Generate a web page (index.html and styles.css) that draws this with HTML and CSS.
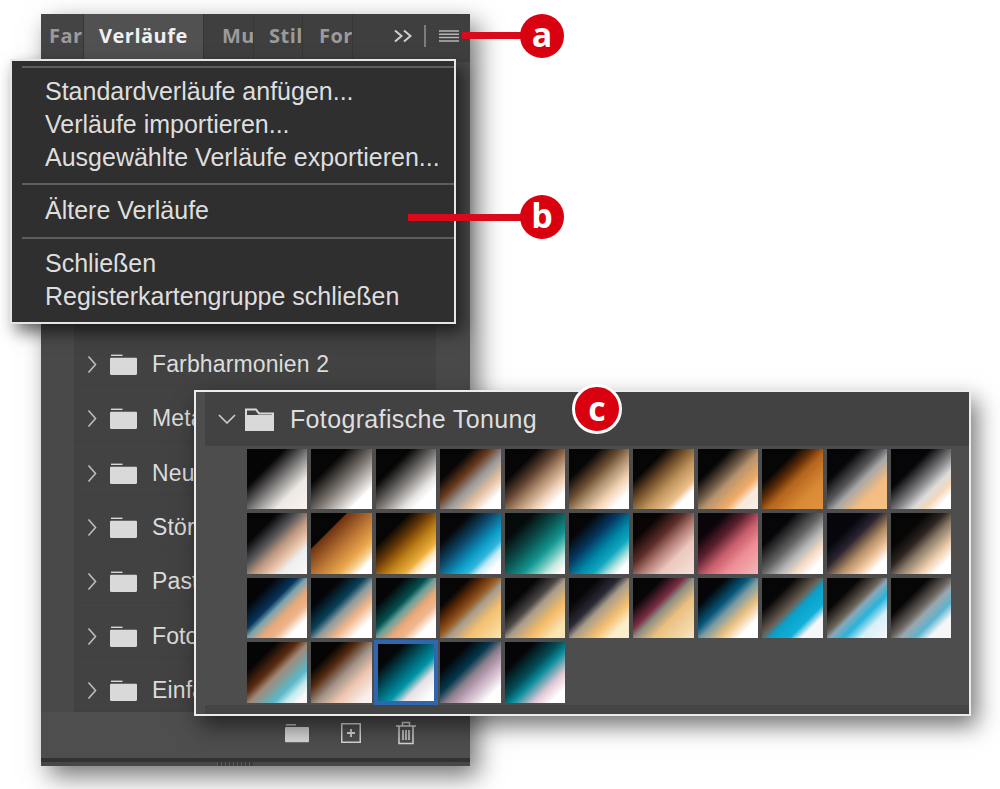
FILE: index.html
```html
<!DOCTYPE html>
<html lang="de">
<head>
<meta charset="utf-8">
<title>Verläufe</title>
<link rel="stylesheet" href="styles.css">
</head>
<body>
<svg class="defs" width="0" height="0" aria-hidden="true">
  <symbol id="folder" viewBox="0 0 27 21"><path d="M1 0.6h11.5v1.4H1z" fill="currentColor"/><path d="M0 4.600c0-.5.4-.9.9-.9h25.2c.5 0 .9.4.9.9v15.2c0 .7-.5 1.2-1.2 1.2H1.200C.5 21 0 20.500 0 19.800z" fill="currentColor"/></symbol>
  <symbol id="chev-r" viewBox="0 0 10 19"><path d="M1.500 1.500 8.500 9.500 1.500 17.500" fill="none" stroke="currentColor" stroke-width="1.600"/></symbol>
</svg>

<main class="panel">
  <header class="tabs">
    <div class="tab tab-far">Far</div>
    <div class="tab tab-active">Verläufe</div>
    <div class="tab tab-mu">Mu</div>
    <div class="tab tab-stil">Stil</div>
    <div class="tab tab-for">For</div>
    <div class="tab-tools">
      <svg class="more" width="18" height="14" viewBox="0 0 18 14"><path d="M1 1.500 7.500 7 1 12.500M10 1.500 16.500 7 10 12.500" fill="none" stroke="currentColor" stroke-width="2"/></svg>
      <span class="tool-sep"></span>
      <svg class="burger" width="20" height="12" viewBox="0 0 20 12"><path d="M0 1h20M0 4.300h20M0 7.600h20M0 11h20" stroke="currentColor" stroke-width="1.500"/></svg>
    </div>
  </header>
  <div class="content">
    <ul class="list">
      <li class="row"><svg class="chev"><use href="#chev-r"/></svg><svg class="folder"><use href="#folder"/></svg><span class="row-label">Farbharmonien 2</span></li>
      <li class="row"><svg class="chev"><use href="#chev-r"/></svg><svg class="folder"><use href="#folder"/></svg><span class="row-label">Metallisch</span></li>
      <li class="row"><svg class="chev"><use href="#chev-r"/></svg><svg class="folder"><use href="#folder"/></svg><span class="row-label">Neutral</span></li>
      <li class="row"><svg class="chev"><use href="#chev-r"/></svg><svg class="folder"><use href="#folder"/></svg><span class="row-label">Störung</span></li>
      <li class="row"><svg class="chev"><use href="#chev-r"/></svg><svg class="folder"><use href="#folder"/></svg><span class="row-label">Pastell</span></li>
      <li class="row"><svg class="chev"><use href="#chev-r"/></svg><svg class="folder"><use href="#folder"/></svg><span class="row-label">Foto</span></li>
      <li class="row"><svg class="chev"><use href="#chev-r"/></svg><svg class="folder"><use href="#folder"/></svg><span class="row-label">Einfach</span></li>
    </ul>
  </div>
  <footer class="foot">
    <svg class="foot-folder" width="24" height="20"><use href="#folder"/></svg>
    <svg class="foot-new" width="20" height="20" viewBox="0 0 20 20"><rect x=".75" y=".75" width="18.500" height="18.500" fill="none" stroke="currentColor" stroke-width="1.500"/><path d="M10 6v8M6 10h8" stroke="currentColor" stroke-width="1.800"/></svg>
    <svg width="20" height="24" viewBox="0 0 20 24"><path d="M0 5h20M6.500 5V1.500h7V5M3 5v17.500h14V5M7 9v10M10 9v10M13 9v10" fill="none" stroke="currentColor" stroke-width="1.500"/></svg>
  </footer>
  <div class="foot-bar"></div>
  <div class="grip"><span class="grip-dots"></span></div>
</main>

<nav class="menu">
  <ul class="menu-group group-1">
    <li>Standardverläufe anfügen...</li>
    <li>Verläufe importieren...</li>
    <li>Ausgewählte Verläufe exportieren...</li>
  </ul>
  <ul class="menu-group group-2">
    <li>Ältere Verläufe</li>
  </ul>
  <ul class="menu-group group-3">
    <li>Schließen</li>
    <li>Registerkartengruppe schließen</li>
  </ul>
</nav>

<section class="float">
  <div class="float-head">
    <svg class="float-chev" width="18" height="10" viewBox="0 0 18 10"><path d="M1 1 9 9 17 1" fill="none" stroke="currentColor" stroke-width="1.600"/></svg>
    <svg class="float-folder" width="29" height="23" viewBox="0 0 29 23"><path d="M1 22V1.500h10l3 4h14V22z M1 8h27" fill="none" stroke="currentColor" stroke-width="2"/><path d="M1 8h27v14H1z" fill="currentColor"/></svg>
    <span class="float-title">Fotografische Tonung</span>
  </div>
  <div class="tiles">
    <div class="tile t1"></div><div class="tile t2"></div><div class="tile t3"></div><div class="tile t4"></div><div class="tile t5"></div><div class="tile t6"></div><div class="tile t7"></div><div class="tile t8"></div><div class="tile t9"></div><div class="tile t10"></div><div class="tile t11"></div>
    <div class="tile t12"></div><div class="tile t13"></div><div class="tile t14"></div><div class="tile t15"></div><div class="tile t16"></div><div class="tile t17"></div><div class="tile t18"></div><div class="tile t19"></div><div class="tile t20"></div><div class="tile t21"></div><div class="tile t22"></div>
    <div class="tile t23"></div><div class="tile t24"></div><div class="tile t25"></div><div class="tile t26"></div><div class="tile t27"></div><div class="tile t28"></div><div class="tile t29"></div><div class="tile t30"></div><div class="tile t31"></div><div class="tile t32"></div><div class="tile t33"></div>
    <div class="tile t34"></div><div class="tile t35"></div><div class="tile t36 selected"></div><div class="tile t37"></div><div class="tile t38"></div>
  </div>
  <div class="float-bottom"></div>
</section>

<div class="callout callout-a"><span class="callout-line"></span><span class="badge">a</span></div>
<div class="callout callout-b"><span class="callout-line"></span><span class="badge">b</span></div>
<div class="badge badge-c">c</div>
</body>
</html>
```

FILE: styles.css
```css
* { box-sizing: border-box; }
html, body { margin: 0; padding: 0; }
body {
  position: relative;
  width: 1000px;
  height: 789px;
  overflow: hidden;
  background: #fff;
  font-family: "Liberation Sans", Arial, sans-serif;
}
ul { list-style: none; margin: 0; padding: 0; }
.defs { position: absolute; }

/* Main panel */
.panel {
  margin: 14px 0 0 41px;
  width: 429px;
  height: 752px;
  background: #494949;
  display: flex;
  flex-direction: column;
  box-shadow: 8px 10px 24px rgba(0, 0, 0, .55);
}
.tabs {
  height: 48px;
  flex: none;
  display: flex;
  background: #3f3f3f;
  font-family: "Open Sans", sans-serif;
  font-weight: 700;
  font-size: 20px;
  line-height: 43px;
  color: #9b9b9b;
  letter-spacing: .5px;
}
.tab { flex: none; border-right: 1px solid #363636; white-space: nowrap; overflow: hidden; }
.tab-far { width: 43px; padding-left: 8px; background: #444; }
.tab-active { width: 120px; padding-left: 15px; background: #515151; color: #f0f0f0; }
.tab-mu { width: 50px; padding-left: 18px; }
.tab-stil { width: 49px; padding-left: 15px; }
.tab-for { width: 50px; padding-left: 16px; }
.tab-tools {
  flex: 1;
  display: flex;
  align-items: center;
  padding: 0 11px 4px 41px;
  color: #bcbcbc;
}
.more { margin-right: 12px; color: #d0d0d0; }
.tool-sep { width: 2px; height: 22px; background: #7c7c7c; margin-right: 13px; }
.burger { color: #b5b5b5; }

.content { flex: 1; display: flex; padding: 0 34px 0 33px; min-height: 0; }
.list {
  flex: 1;
  display: flex;
  flex-direction: column;
  justify-content: flex-end;
  background: #414141;
}
.row {
  height: 54.3px;
  padding-top: 12px;
  display: flex;
  align-items: center;
  flex: none;
  color: #dcdcdc;
  font-size: 23px;
  border-bottom: 1px solid #3f3f3f;
  background: #424242;
}
.chev { width: 10px; height: 19px; margin-left: 13px; color: #bdbdbd; }
.folder { width: 27px; height: 21px; margin-left: 13px; color: #d9d9d9; }
.row-label { margin-left: 15px; white-space: nowrap; letter-spacing: .13px; }

.foot {
  height: 46px;
  flex: none;
  background: #4e4e4e;
  display: flex;
  align-items: center;
  justify-content: flex-end;
  padding: 0 54px 4px 0;
  color: #d6d6d6;
}
.foot-folder { margin-right: 32px; }
.foot-new { margin-right: 35px; }
.foot-bar { height: 4px; flex: none; background: #323232; }
.grip { height: 4px; flex: none; display: flex; justify-content: center; background: #474747; padding-right: 42px; }
.grip-dots {
  width: 36px;
  background: repeating-linear-gradient(90deg, #5c5c5c 0 1px, #3c3c3c 1px 4px);
}

/* Flyout menu */
.menu {
  position: absolute;
  left: 10px;
  top: 59px;
  width: 446px;
  height: 265px;
  background: #2f2f2f;
  border: 2px solid #e6e6e6;
  color: #dedede;
  font-size: 25px;
  line-height: 33px;
  padding: 5px 0 0 10px;
  box-shadow: 6px 8px 16px rgba(0, 0, 0, .6);
}
.menu-group { padding-left: 23px; border-top: 2px solid #5d5d5d; }
.group-1 { padding-top: 7px; padding-bottom: 9px; }
.group-2 { padding-top: 9px; padding-bottom: 10px; }
.group-3 { padding-top: 8px; }
.menu-group li { white-space: nowrap; }

/* Floating group */
.float {
  position: absolute;
  left: 194px;
  top: 390px;
  width: 777px;
  height: 326px;
  background: #4d4d4d;
  border: 2px solid #ececec;
  box-shadow: 6px 10px 22px rgba(0, 0, 0, .55);
  display: flex;
  flex-direction: column;
}
.float-head {
  height: 54px;
  flex: none;
  margin-left: 9px;
  background: #424242;
  display: flex;
  align-items: center;
  color: #dedede;
}
.float-chev { margin-left: 13px; color: #cfcfcf; }
.float-folder { margin-left: 9px; color: #d9d9d9; }
.float-title { margin-left: 16px; font-size: 25px; letter-spacing: .35px; }
.tiles {
  margin: 3px 0 0 51px;
  display: grid;
  grid-template-columns: repeat(11, 60.4px);
  grid-auto-rows: 60.4px;
  gap: 4px;
}
.float-bottom { margin: 2px 0 0 9px; flex: 1; background: #444; }
.selected { outline: 4px solid #2f66ae; outline-offset: -2px; }

.t1 { background: linear-gradient(135deg, #050506 31%, #8f8d8b 56%, #eee9e4 74%, #fdf3ec 100%); }
.t2 { background: linear-gradient(135deg, #060606 29%, #7b746e 54%, #d8d4d0 74%, #e9e6e3 78%, #fff 82%); }
.t3 { background: linear-gradient(135deg, #060606 29%, #7a7673 52%, #e6e4e2 72%, #fff 82%); }
.t4 { background: linear-gradient(135deg, #060606 26%, #6a3a1e 42%, #999 56%, #e8c4a6 72%, #fff 86%); }
.t5 { background: linear-gradient(135deg, #060606 27%, #5f4330 44%, #ae8a6c 58%, #f0d2b8 74%, #fff 86%); }
.t6 { background: linear-gradient(135deg, #060606 25%, #6f5034 44%, #ae9270 56%, #f4d4b4 72%, #fff 86%); }
.t7 { background: linear-gradient(135deg, #060606 27%, #74502a 44%, #c0945c 60%, #ecc08c 76%, #fff 84%); }
.t8 { background: linear-gradient(135deg, #060606 27%, #6e5a46 44%, #b8946e 54%, #f2ac68 72%, #f6e8da 82%, #fbf1e7 100%); }
.t9 { background: linear-gradient(135deg, #060606 29%, #5e2c08 42%, #b5651c 54%, #d98a36 76%, #e2923e 100%); }
.t10 { background: linear-gradient(135deg, #060608 27%, #5a5a5c 46%, #a8a8a8 56%, #f4bc80 74%, #f6c084 100%); }
.t11 { background: linear-gradient(135deg, #060608 33%, #8a8a8c 56%, #ddd 68%, #f5d8b8 78%, #fff 88%); }
.t12 { background: linear-gradient(135deg, #060606 25%, #55565a 42%, #bf9a80 56%, #e9c4aa 68%, #eee 78%, #fafafa 100%); }
.t13 { background: linear-gradient(135deg, #060606 29%, #6e3210 30%, #b26e30 50%, #eba64c 71%, #f4d090 80%, #fff 88%); }
.t14 { background: linear-gradient(135deg, #060606 27%, #6a3a08 44%, #b87a14 58%, #efb040 74%, #ffe2b0 80%, #fff 88%); }
.t15 { background: linear-gradient(135deg, #060608 25%, #0d4a6c 44%, #0d9cc8 62%, #2fb6dc 72%, #c8ecf4 80%, #fff 90%); }
.t16 { background: linear-gradient(135deg, #050a0a 23%, #0a4a48 44%, #109490 64%, #5cc0b8 74%, #c8e8e0 84%, #fff 96%); }
.t17 { background: linear-gradient(135deg, #060608 23%, #043a64 42%, #0088a8 58%, #10a8c0 70%, #b6e4e0 82%, #fff 90%); }
.t18 { background: linear-gradient(135deg, #0a0505 23%, #5c2c28 42%, #b07a72 56%, #ecc8be 72%, #f6e2d8 100%); }
.t19 { background: linear-gradient(135deg, #0a0508 23%, #5c2030 40%, #c85e6c 56%, #ee8c94 72%, #f4b8bc 100%); }
.t20 { background: linear-gradient(135deg, #060608 27%, #666 50%, #b8b8b8 64%, #f6dcc6 76%, #fff 88%); }
.t21 { background: linear-gradient(135deg, #06060c 29%, #2a2430 44%, #ae8a64 60%, #f0c49a 74%, #fff 86%); }
.t22 { background: linear-gradient(135deg, #060606 29%, #2c2420 44%, #8a7a68 56%, #f0d0b0 74%, #fff 86%); }
.t23 { background: linear-gradient(135deg, #050508 23%, #06355c 42%, #7aa4b0 50%, #eaa878 62%, #eeb68c 72%, #fff 84%); }
.t24 { background: linear-gradient(135deg, #050508 25%, #07415a 44%, #8a9aa0 54%, #f0b488 68%, #fff 84%); }
.t25 { background: linear-gradient(135deg, #050508 23%, #04504e 42%, #6aa09a 50%, #eca878 62%, #f0b890 72%, #fff 84%); }
.t26 { background: linear-gradient(135deg, #060606 24%, #5e2a06 36%, #985c24 48%, #a89c8c 56%, #f4c070 72%, #f8e4b0 100%); }
.t27 { background: linear-gradient(135deg, #060606 27%, #4a4644 44%, #a89c8c 52%, #f4bc68 70%, #f8e6b4 88%); }
.t28 { background: linear-gradient(135deg, #060608 24%, #2a2a34 42%, #a89c8c 52%, #f4c070 70%, #faeeca 84%, #faf0cc 100%); }
.t29 { background: linear-gradient(135deg, #060606 24%, #7a2c44 42%, #8c8c80 50%, #ecc080 66%, #f4e8c0 100%); }
.t30 { background: linear-gradient(135deg, #050508 23%, #05587c 42%, #7a9aa4 52%, #ecc080 68%, #fff 84%); }
.t31 { background: linear-gradient(135deg, #060606 27%, #6c6056 48%, #0aa0c8 56%, #10b0d8 72%, #f4f6f8 82%); }
.t32 { background: linear-gradient(135deg, #060606 27%, #6c6258 46%, #8aa8b8 52%, #26b4dc 64%, #d8f0f6 78%, #f8f8fa 100%); }
.t33 { background: linear-gradient(135deg, #060606 31%, #6c6560 50%, #9aa8b0 58%, #5cb4d0 70%, #f4f6f8 82%); }
.t34 { background: linear-gradient(135deg, #050505 24%, #5a2c10 42%, #a08878 52%, #5cb8cc 72%, #c8ecec 82%, #fbf8f8 92%); }
.t35 { background: linear-gradient(135deg, #050505 24%, #552a10 38%, #a09488 54%, #eec4b0 70%, #f8f0ec 90%); }
.t36 { background: linear-gradient(135deg, #040608 24%, #006878 48%, #0096a8 60%, #e8e0e4 72%, #fff 90%); }
.t37 { background: linear-gradient(135deg, #050508 24%, #02384c 42%, #8c7e8c 54%, #c4a8bc 66%, #fff 86%); }
.t38 { background: linear-gradient(135deg, #050508 24%, #045058 46%, #0a8c9c 56%, #e4c8d4 74%, #fff 88%); }

/* Callouts */
.callout { position: absolute; display: flex; align-items: center; }
.callout-a { left: 462px; top: 14px; }
.callout-b { left: 408px; top: 195px; }
.callout-line { height: 7px; background: #d90a1c; flex: none; }
.callout-a .callout-line { width: 60px; margin-top: -2px; margin-right: -2px; }
.callout-b .callout-line { width: 114px; margin-top: 1px; margin-right: -2px; }
.badge {
  flex: none;
  width: 44px;
  height: 44px;
  border-radius: 50%;
  background: #d90010;
  color: #fff;
  font-family: "Open Sans", sans-serif;
  font-weight: 700;
  font-size: 34px;
  line-height: 40px;
  text-align: center;
}
.badge-c {
  position: absolute;
  left: 572px;
  top: 384px;
  width: 50px;
  height: 50px;
  line-height: 42px;
  border: 3px solid #fff;
}
```
